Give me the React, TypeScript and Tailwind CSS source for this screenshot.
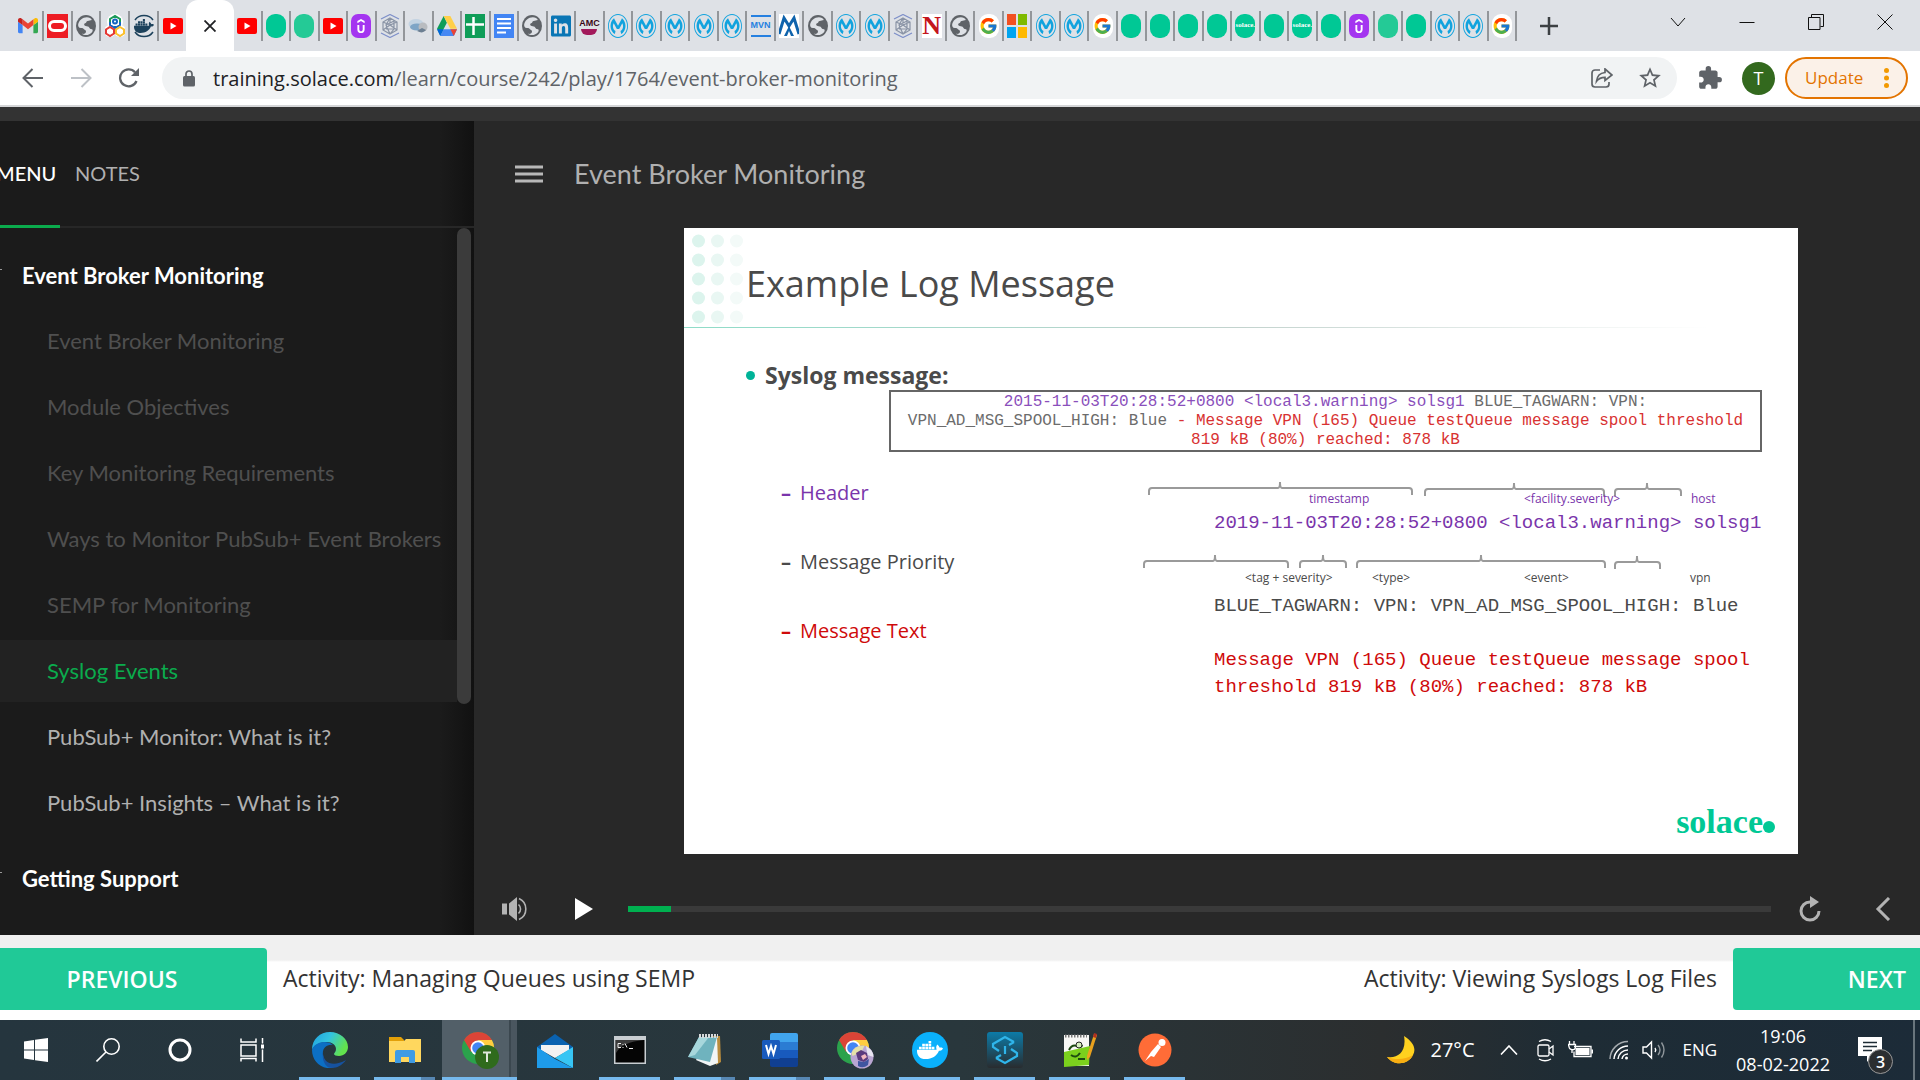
import type { ReactNode } from "react";
import { FcGoogle } from "react-icons/fc";
import { FaLinkedin, FaDocker } from "react-icons/fa";
import { SiUdemy, SiMulesoft } from "react-icons/si";
import { MdExtension, MdOutlineStarBorder } from "react-icons/md";

/* ---------- favicons ---------- */

const Gmail = () => (
  <svg viewBox="0 0 52 40" className="h-[17px] w-5" role="img" aria-label="Gmail">
    <path fill="#4285f4" d="M3.500 40H12V19L0 10v26.500C0 38.400 1.600 40 3.500 40z" />
    <path fill="#34a853" d="M40 40h8.500c1.900 0 3.500-1.600 3.500-3.500V10L40 19z" />
    <path fill="#fbbc04" d="M40 4v15l12-9V5.500C52 1 47 -1.500 43 1.500z" />
    <path fill="#ea4335" d="M12 19V4l14 10.500L40 4v15L26 29.500z" />
    <path fill="#c5221f" d="M0 5.500V10l12 9V4L9 1.500C5-1.500 0 1 0 5.500z" />
  </svg>
);
const Oracle = () => (
  <span className="flex h-6 w-[21px] items-center justify-center bg-[#ed1c24]">
    <span className="h-3 w-[19px] rounded-full border-[3px] border-white" />
  </span>
);
const Globe = () => (
  <svg viewBox="0 0 24 24" className="h-[22px] w-5" preserveAspectRatio="none" aria-label="Site">
    <circle cx="12" cy="12" r="12" fill="#5f6368" />
    <path fill="#dee1e6" d="M13 2.500c3 0 5 1 6 3-2 0-3 1-5 1s-1 2-3 2.500-1.500 2.500.5 3 3.500 0 4.500 2 3.500 1 4 2.500-2 3.500-4 4.500c-3 1.500-7 1-9-.5 3 .5 5-.5 5-2.500s-2-1.500-3-3-3-.5-5-1c-1-1-1.500-2-1.500-3C3 6 8 2.500 13 2.500z" />
  </svg>
);
const Hexes = () => (
  <svg viewBox="0 0 20 24" className="h-6 w-5" fill="none" strokeWidth="2" aria-label="Hexagons">
    <circle cx="10" cy="8" r="8" fill="#fff" stroke="none" />
    <circle cx="5" cy="17" r="6" fill="#fff" stroke="none" />
    <circle cx="15" cy="17" r="6" fill="#fff" stroke="none" />
    <path stroke="#1b9a59" d="M5 8V5l5-3 5 3v3" />
    <path stroke="#1565c0" d="M5 8v3l5 3 5-3V8M10 12v4" />
    <circle cx="10" cy="7.500" r="2" stroke="#1565c0" />
    <path stroke="#e53935" d="M5 13l4 2.500v4L5 22l-4-2.500v-4z" />
    <path stroke="#fbc02d" d="M15 13l4 2.500v4L15 22l-4-2.500v-4z" />
  </svg>
);
const DockerHub = () => (
  <span className="relative flex h-6 w-5 items-center justify-center overflow-hidden text-[#1d425c]">
    <svg viewBox="0 0 20 24" className="absolute inset-0" fill="none" stroke="currentColor" strokeWidth="1.500" aria-hidden="true">
      <path d="M1 6C5 0 15 0 19 6M1 18c4 6 14 6 18 0" />
    </svg>
    <FaDocker className="h-4 w-5" />
  </span>
);
const YouTube = () => (
  <svg viewBox="0 0 20 16" className="h-4 w-5" aria-label="YouTube">
    <rect width="20" height="16" rx="2" fill="#f00" />
    <path d="M7.500 4.500v7l6-3.500z" fill="#fff" />
  </svg>
);
const Green = () => <span className="h-6 w-5 rounded-[9px] bg-[#00c895]" />;
const LightGreen = () => <span className="h-6 w-5 rounded-[9px] bg-[#24ca96]" />;
const SolaceIcon = () => (
  <span className="flex h-6 w-5 items-center justify-center rounded-[9px] bg-[#00c895] font-['Liberation_Serif',serif] text-[7px] font-bold text-white">
    solace.
  </span>
);
const Udemy = () => (
  <span className="flex h-6 w-5 items-center justify-center rounded-[7px] bg-[#a435f0] text-white">
    <SiUdemy className="h-[18px] w-[14px]" />
  </span>
);
const Cube = () => (
  <svg viewBox="0 0 20 24" className="h-6 w-5" fill="none" strokeWidth="1.200" aria-label="Cube">
    <path stroke="#7d8fc9" d="M1 5l9-4.500L19 5M1 19l9 4.500 9-4.500" />
    <path stroke="#8a94a6" d="M10 4l7 4v8l-7 4-7-4V8zM10 4v7M3 8l7 3 7-3M10 11l-7 5M10 11l7 5M10 20l-4-9 8-4M6 11l4-7M14 7v8l-4 5M6 15h8" />
  </svg>
);
const Cloud = () => (
  <svg viewBox="0 0 20 20" className="h-5 w-5" aria-label="Cloud">
    <ellipse cx="8" cy="8" rx="7.500" ry="5" fill="#c3d3e2" />
    <ellipse cx="9" cy="11" rx="7" ry="3.500" fill="#7fa5c6" />
    <ellipse cx="15" cy="11" rx="4.500" ry="4.500" fill="#b9bcc0" />
    <path d="M9 15c4 2 6 2 9-1l-4-2z" fill="#6c7f92" />
  </svg>
);
const Drive = () => (
  <svg viewBox="0 0 87 78" className="h-5 w-5" preserveAspectRatio="none" aria-label="Drive">
    <path fill="#0f9d58" d="M29 0L0 50l14 26 29-50z" />
    <path fill="#ffcf48" d="M29 0h29l29 50H58z" />
    <path fill="#4688f4" d="M14 78l15-26h58L73 78z" />
    <path fill="#0066da" d="M0 52h29L14 78z" />
    <path fill="#ea4335" d="M87 52H58l15 26z" />
  </svg>
);
const Sheets = () => (
  <svg viewBox="0 0 20 24" className="h-6 w-5" aria-label="Sheets">
    <rect width="20" height="24" fill="#0f9d58" />
    <path d="M8.500 3v18M1 10.500h18" stroke="#fff" strokeWidth="2.500" />
  </svg>
);
const Docs = () => (
  <svg viewBox="0 0 20 24" className="h-6 w-5" aria-label="Docs">
    <rect width="20" height="24" fill="#4285f4" />
    <path d="M3 5h14M3 9.500h14M3 14h14M3 18.500h9" stroke="#fff" strokeWidth="2" />
  </svg>
);
const LinkedIn = () => <FaLinkedin className="h-6 w-5 text-[#0a76b5]" preserveAspectRatio="none" />;
const Amc = () => (
  <span className="flex h-6 w-5 flex-col items-center justify-center font-['Liberation_Sans',sans-serif] text-[9px] leading-3 font-bold text-[#3a0616]">
    AMC
    <span className="h-1.5 w-4 rounded-b-full bg-[#a3195b]" />
  </span>
);
const Mule = () => (
  <SiMulesoft className="h-6 w-5 text-[#12a3de]" preserveAspectRatio="none" />
);
const Mvn = () => (
  <span className="flex h-[22px] w-5 items-center justify-center border-y-2 border-[#2680e0] font-['Liberation_Sans',sans-serif] text-[9px] font-bold text-[#2680e0]">
    MVN
  </span>
);
const Peaks = () => (
  <svg viewBox="0 0 20 24" className="h-6 w-5" aria-label="Peaks">
    <rect width="20" height="24" fill="#fff" />
    <path d="M0 20L5 4l5 8 5-8 5 16" fill="none" stroke="#0f63ac" strokeWidth="3" />
    <path d="M5 22l5-10 5 10h-3l-2-5-2 5z" fill="#0f63ac" />
  </svg>
);
const NIcon = () => (
  <span className="flex h-6 w-5 items-center justify-center bg-white font-['Liberation_Serif',serif] text-[26px] leading-6 font-bold text-[#c4151c]">
    N
  </span>
);
const Google = () => (
  <span className="flex h-6 w-5 items-center justify-center rounded-[9px] bg-white">
    <FcGoogle className="h-5 w-[19px]" />
  </span>
);
const Microsoft = () => (
  <span className="grid h-6 w-5 grid-cols-2 gap-0.5">
    <span className="bg-[#f25022]" />
    <span className="bg-[#7fba00]" />
    <span className="bg-[#00a4ef]" />
    <span className="bg-[#ffb900]" />
  </span>
);

const leftTabs = [Gmail, Oracle, Globe, Hexes, DockerHub, YouTube];
const rightTabs = [
  YouTube, Green, LightGreen, YouTube, Udemy, Cube, Cloud, Drive, Sheets, Docs,
  Globe, LinkedIn, Amc, Mule, Mule, Mule, Mule, Mule, Mvn, Peaks,
  Globe, Mule, Mule, Cube, NIcon, Globe, Google, Microsoft, Mule, Mule,
  Google, Green, Green, Green, Green, SolaceIcon, Green, SolaceIcon, Green, Udemy,
  LightGreen, Green, Mule, Mule, Google,
];

function Tab({ icon: Icon, last }: { icon: () => ReactNode; last?: boolean }) {
  return (
    <button
      aria-label="Tab"
      className={
        last
          ? "flex h-[30px] min-w-0 flex-1 items-center justify-center"
          : "flex h-[30px] min-w-0 flex-1 items-center justify-center border-r-2 border-[#93969a]"
      }
    >
      <Icon />
    </button>
  );
}

function TabStrip() {
  return (
    <div className="flex h-[51px] bg-[#dee1e6] pl-[15px] text-[#202124]">
      <div className="flex w-[171px] items-center">
        {leftTabs.map((icon, i) => (
          <Tab key={i} icon={icon} last={i === leftTabs.length - 1} />
        ))}
      </div>
      <div className="flex w-12 items-center justify-center rounded-t-xl bg-white">
        <button aria-label="Close tab">
          <svg viewBox="0 0 12 12" className="h-3 w-3" stroke="#202124" strokeWidth="1.800">
            <path d="M0.500 0.500l11 11M11.500 0.500l-11 11" />
          </svg>
        </button>
      </div>
      <div className="flex w-[1283px] items-center">
        {rightTabs.map((icon, i) => (
          <Tab key={i} icon={icon} />
        ))}
      </div>
      <button aria-label="New tab" className="ml-[23px] self-center">
        <svg viewBox="0 0 18 18" className="h-[18px] w-[18px]" stroke="#3c4043" strokeWidth="2.500">
          <path d="M9 0v18M0 9h18" />
        </svg>
      </button>
      <div className="ml-auto flex h-[43px] items-center gap-[53px] pr-[27px]">
        <button aria-label="Search tabs">
          <svg viewBox="0 0 16 16" className="h-4 w-4" fill="none" stroke="#111">
            <path d="M1 4l7 8 7-8" />
          </svg>
        </button>
        <button aria-label="Minimize">
          <svg viewBox="0 0 16 16" className="h-4 w-4" fill="none" stroke="#111">
            <path d="M0.500 8.500h15" />
          </svg>
        </button>
        <button aria-label="Restore">
          <svg viewBox="0 0 16 16" className="h-4 w-4" fill="none" stroke="#111">
            <path d="M0.500 3.500h11.500v12h-11.500zM3.500 3.500v-3h12v12h-3" />
          </svg>
        </button>
        <button aria-label="Close">
          <svg viewBox="0 0 16 16" className="h-4 w-4" fill="none" stroke="#111">
            <path d="M0.500 0.500l15 15M15.500 0.500l-15 15" />
          </svg>
        </button>
      </div>
    </div>
  );
}

function AddressBar() {
  return (
    <div className="flex h-14 items-center border-b-2 border-[#d5d6d8] bg-white pr-3">
      <button aria-label="Back" className="ml-[22px]">
        <svg viewBox="0 0 22 20" className="h-5 w-[22px]" fill="none" stroke="#5f6368" strokeWidth="2">
          <path d="M21 10H2M10.500 1L1.500 10l9 9" />
        </svg>
      </button>
      <button aria-label="Forward" className="ml-[26px]">
        <svg viewBox="0 0 22 20" className="h-5 w-[22px]" fill="none" stroke="#bdc1c6" strokeWidth="2">
          <path d="M1 10h19M11.500 1l9 9-9 9" />
        </svg>
      </button>
      <button aria-label="Reload" className="ml-[26px]">
        <svg viewBox="0 0 22 20" className="h-5 w-[22px]" fill="none" stroke="#5f6368" strokeWidth="2.300">
          <path d="M18.500 13A8.500 8.500 0 1 1 17 4.200" />
          <path d="M21 0v8h-8z" fill="#5f6368" stroke="none" />
        </svg>
      </button>
      <div className="ml-[22px] flex h-[42px] flex-1 items-center rounded-full bg-[#f1f3f4] pr-3.5 pl-5">
        <svg viewBox="0 0 14 17" className="h-[17px] w-3.5" fill="#5f6368" aria-label="Secure">
          <rect x="1" y="6" width="12" height="10.500" rx="1.500" />
          <path d="M4 7V4a3 3 0 0 1 6 0v3" fill="none" stroke="#5f6368" strokeWidth="1.700" />
        </svg>
        <span className="ml-[17px] flex-1 pt-0.5 text-xl text-[#5f6368]">
          <span className="text-[#202124]">training.solace.com</span>
          /learn/course/242/play/1764/event-broker-monitoring
        </span>
        <button aria-label="Share">
          <svg viewBox="0 0 22 20" className="h-5 w-[22px]" fill="none" stroke="#5f6368" strokeWidth="1.700">
            <path d="M9 2H4a3 3 0 0 0-3 3v11a3 3 0 0 0 3 3h11a3 3 0 0 0 3-3v-2" />
            <path d="M14 1l7 6-7 5.500V9.300c-4 0-6.500 1.200-8.500 4C6 8.500 9 5 14 4.500z" />
          </svg>
        </button>
        <button aria-label="Bookmark" className="ml-6">
          <MdOutlineStarBorder className="h-[26px] w-[26px] text-[#5f6368]" />
        </button>
      </div>
      <button aria-label="Extensions" className="ml-5">
        <MdExtension className="h-[26px] w-[26px] text-[#5f6368]" />
      </button>
      <button className="ml-[19px] h-[33px] w-[33px] rounded-full bg-[#33691e] text-lg text-white">T</button>
      <button className="ml-2.5 flex h-[42px] w-[123px] items-center justify-between rounded-full border-2 border-[#e37400] bg-[#fbf1e8] pr-[17px] pl-[18px] text-[17px] text-[#e37400]">
        Update
        <svg viewBox="0 0 5 20" className="h-5 w-[5px]" fill="#f29900">
          <circle cx="2.500" cy="2.500" r="2.500" />
          <circle cx="2.500" cy="10" r="2.500" />
          <circle cx="2.500" cy="17.500" r="2.500" />
        </svg>
      </button>
    </div>
  );
}

/* ---------- course player ---------- */

const lessons = [
  { title: "Event Broker Monitoring", state: "done" },
  { title: "Module Objectives", state: "done" },
  { title: "Key Monitoring Requirements", state: "done" },
  { title: "Ways to Monitor PubSub+ Event Brokers", state: "done" },
  { title: "SEMP for Monitoring", state: "done" },
  { title: "Syslog Events", state: "current" },
  { title: "PubSub+ Monitor: What is it?", state: "next" },
  { title: "PubSub+ Insights – What is it?", state: "next" },
];
const lessonStyle: Record<string, string> = {
  done: "text-[#4f4f4f]",
  current: "bg-[#222] text-[#0bab4d]",
  next: "text-[#b0b0b0]",
};

function SectionHeading({ children }: { children: ReactNode }) {
  return (
    <h2 className="flex h-[62px] items-center pb-0.5 text-[22px] font-bold text-white">
      <span className="mb-3 h-px w-0.5 bg-[#999]" />
      <span className="pl-5">{children}</span>
    </h2>
  );
}

function Sidebar() {
  return (
    <aside className="flex w-[474px] shrink-0 flex-col overflow-hidden bg-[#1b1b1b] bg-[linear-gradient(to_left,#111_0px,#1b1b1b_34px)] font-['Lato',sans-serif]">
      <div className="flex h-[107px] border-b-2 border-[#272727] text-xl">
        <button className="-mb-0.5 w-[60px] border-b-[3px] border-[#0bab4d] text-left font-medium text-white">
          <span className="-ml-1">MENU</span>
        </button>
        <button className="ml-[15px] pb-0.5 text-[#b0b0b0]">NOTES</button>
      </div>
      <div className="flex flex-1">
        <nav className="flex-1 pt-[17px]">
          <SectionHeading>Event Broker Monitoring</SectionHeading>
          <ul className="mt-[3px] mb-[14px] flex flex-col gap-1">
            {lessons.map((l) => (
              <li key={l.title}>
                <a href="#lesson" className={`flex h-[62px] items-center pb-0.5 pl-[47px] text-[22px] whitespace-nowrap ${lessonStyle[l.state]}`}>
                  {l.title}
                </a>
              </li>
            ))}
          </ul>
          <SectionHeading>Getting Support</SectionHeading>
        </nav>
        <div className="w-[17px]">
          <div className="h-[476px] w-3.5 rounded-full bg-[#3b3b3b]" />
        </div>
      </div>
    </aside>
  );
}

type Brace = { from: number; to: number; peak: number; y: number };
const braces: Brace[] = [
  { from: 6, to: 269, peak: 137, y: 36 },
  { from: 282, to: 461, peak: 371, y: 37 },
  { from: 472, to: 538, peak: 504, y: 37 },
  { from: 1, to: 145, peak: 72, y: 109 },
  { from: 157, to: 203, peak: 180, y: 109 },
  { from: 214, to: 462, peak: 338, y: 109 },
  { from: 472, to: 517, peak: 494, y: 110 },
];

function SyslogDiagram() {
  const label = "absolute font-['Open_Sans',sans-serif] text-xs leading-4 whitespace-nowrap";
  return (
    <div className="relative mr-9 ml-auto w-[619px] pt-[57px] pl-[71px] font-['Liberation_Mono',monospace] text-[19px]">
      <svg viewBox="0 0 619 250" className="absolute top-0 left-0 h-[250px] w-[619px]" fill="none" stroke="#9a9a9a" strokeWidth="2" aria-hidden="true">
        {braces.map((b) => (
          <path
            key={`${b.from}-${b.y}`}
            d={`M${b.from} ${b.y + 7}v-4q0-3 3-3H${b.peak - 2}q2 0 2-6q0 6 2 6H${b.to - 3}q3 0 3 3v4`}
          />
        ))}
      </svg>
      <div className="text-[#7a35ab]">
        <span className={`${label} top-[39px] left-[166px]`}>timestamp</span>
        <span className={`${label} top-[39px] left-[381px]`}>&lt;facility.severity&gt;</span>
        <span className={`${label} top-[39px] left-[548px]`}>host</span>
        <p className="h-7 leading-7 whitespace-nowrap">2019-11-03T20:28:52+0800 &lt;local3.warning&gt; solsg1</p>
      </div>
      <div className="mt-[55px] text-[#4a4a4a]">
        <span className={`${label} top-[118px] left-[102px]`}>&lt;tag + severity&gt;</span>
        <span className={`${label} top-[118px] left-[229px]`}>&lt;type&gt;</span>
        <span className={`${label} top-[118px] left-[381px]`}>&lt;event&gt;</span>
        <span className={`${label} top-[118px] left-[547px]`}>vpn</span>
        <p className="h-7 leading-7 whitespace-nowrap">BLUE_TAGWARN: VPN: VPN_AD_MSG_SPOOL_HIGH: Blue</p>
      </div>
      <p className="mt-[27px] leading-[27px] text-[#cf0a0a]">
        Message VPN (165) Queue testQueue message spool threshold 819 kB (80%) reached: 878 kB
      </p>
    </div>
  );
}

function Slide() {
  return (
    <article className="flex min-h-[626px] flex-col bg-white font-['Open_Sans',sans-serif] text-[#4a4a4a]">
      <header className="flex h-[99px]">
        <svg viewBox="0 0 54 99" className="ml-2 h-[99px] w-[54px]" aria-hidden="true">
          {[13, 32, 51, 70, 89].map((y) => (
            <g key={y}>
              <circle cx="6.500" cy={y} r="6.500" fill="#dcf4ed" />
              <circle cx="25.500" cy={y} r="6.500" fill="#e9f7f3" />
              <circle cx="44.500" cy={y} r="6.500" fill="#f3faf8" />
            </g>
          ))}
        </svg>
        <h1 className="pt-[31px] text-[36px] leading-[50px] text-[#4a4a4a]">Example Log Message</h1>
      </header>
      <div className="h-px bg-[linear-gradient(to_right,#8fdcc8,#c3d3ce_50%,#fff_92%)]" />
      <h2 className="mt-[34px] flex h-7 items-center pb-0.5 pl-[62px] text-[23px] font-bold">
        <span className="mr-2.5 h-[9px] w-[9px] rounded-full bg-[#00b398]" />
        Syslog message:
      </h2>
      <p className="mr-9 ml-[205px] h-[62px] border-2 border-[#666] pt-px text-center font-['Liberation_Mono',monospace] text-base leading-[19px] whitespace-nowrap text-[#6c6c6c]">
        <span className="text-[#8a4fbb]">2015-11-03T20:28:52+0800 &lt;local3.warning&gt; solsg1</span> BLUE_TAGWARN: VPN:
        <br />
        VPN_AD_MSG_SPOOL_HIGH: Blue <span className="text-[#d83232]">- Message VPN (165) Queue testQueue message spool threshold</span>
        <br />
        <span className="text-[#d83232]">819 kB (80%) reached: 878 kB</span>
      </p>
      <div className="flex">
        <ul className="mt-[6px] pl-[97px] text-[20px] leading-[69px] whitespace-nowrap">
          <li className="text-[#7a35ab]"><b className="mr-[9px]">–</b>Header</li>
          <li><b className="mr-[9px]">–</b>Message Priority</li>
          <li className="text-[#cf0a0a]"><b className="mr-[9px]">–</b>Message Text</li>
        </ul>
        <SyslogDiagram />
      </div>
      <div className="mt-auto mr-[23px] mb-3.5 flex items-center self-end font-['Liberation_Serif',serif] text-[34px] leading-9 font-bold text-[#00c895]">
        solace
        <span className="mt-2.5 h-3 w-3 rounded-full bg-[#00c895]" />
      </div>
    </article>
  );
}

function Player() {
  return (
    <main className="flex min-w-0 flex-1 flex-col bg-[#282828]">
      <div className="flex h-[107px] items-center pb-0.5 pl-[41px] font-['Lato',sans-serif]">
        <button aria-label="Toggle menu">
          <svg viewBox="0 0 28 18" className="h-[18px] w-7" stroke="#b8b8b8" strokeWidth="3">
            <path d="M0 2h28M0 9h28M0 16h28" />
          </svg>
        </button>
        <h1 className="pl-[31px] text-[27px] leading-9 text-[#b0b0b0]">Event Broker Monitoring</h1>
      </div>
      <div className="pr-[122px] pl-[210px]">
        <Slide />
      </div>
      <div className="flex flex-1 items-center pt-[28px] pr-[29px] pl-[28px]">
        <button aria-label="Volume">
          <svg viewBox="0 0 27 24" className="h-6 w-[27px]" fill="#b3b3b3">
            <path d="M0 6.500h5v11H0zM7 6.500L15 0v24l-8-6.500z" />
            <path d="M16.500 7.500a6 6 0 0 1 0 9M17 1.500a11.500 11.500 0 0 1 0 21" fill="none" stroke="#b3b3b3" strokeWidth="1.600" />
          </svg>
        </button>
        <button aria-label="Play" className="ml-[46px]">
          <svg viewBox="0 0 18 22" className="h-[22px] w-[18px]" fill="#fff">
            <path d="M0 0l18 11L0 22z" />
          </svg>
        </button>
        <div role="progressbar" aria-valuenow={4} aria-label="Progress" className="ml-[35px] h-1.5 flex-1 bg-[#3a3a3a]">
          <div className="h-full w-[43px] bg-[#00b050]" />
        </div>
        <button aria-label="Replay" className="ml-7">
          <svg viewBox="0 0 22 26" className="h-[26px] w-[22px]" fill="none" stroke="#b3b3b3" strokeWidth="3">
            <path d="M11 6a9 9 0 1 0 9 9" />
            <path d="M11 0v12l9-6z" fill="#b3b3b3" stroke="none" />
          </svg>
        </button>
        <button aria-label="Previous slide" className="ml-[54px]">
          <svg viewBox="0 0 16 24" className="h-6 w-4" fill="none" stroke="#b3b3b3" strokeWidth="3">
            <path d="M14 1L3 12l11 11" />
          </svg>
        </button>
      </div>
    </main>
  );
}

function LessonNav() {
  return (
    <footer className="flex h-[85px] items-center bg-[linear-gradient(to_bottom,#f0f0f0_25px,#fff_27px)] pt-[3px] font-['Open_Sans',sans-serif] text-[23px] text-[#333]">
      <button className="h-[62px] w-[267px] rounded-r bg-[#20c997] pr-[23px] font-semibold text-white">PREVIOUS</button>
      <span className="ml-4 pb-0.5">Activity: Managing Queues using SEMP</span>
      <span className="mr-4 ml-auto pb-0.5">Activity: Viewing Syslogs Log Files</span>
      <button className="h-[62px] w-[187px] rounded-l bg-[#20c997] pr-3.5 text-right font-semibold text-white">NEXT</button>
    </footer>
  );
}

/* ---------- taskbar ---------- */

const Edge = () => (
  <svg viewBox="0 0 36 36" className="h-9 w-9">
    <defs>
      <linearGradient id="edgeTop" x1="0" x2="1" y1="0" y2="0.400">
        <stop offset="0" stopColor="#1fa0e0" />
        <stop offset="0.500" stopColor="#33c3e0" />
        <stop offset="1" stopColor="#62e24d" />
      </linearGradient>
    </defs>
    <path fill="url(#edgeTop)" d="M0 18C0 7 8 0 18 0s18 7 18 15c0 5-4 9-9 9-3 0-5-1-5-2 0-1 2-2 2-5 0-4-4-7-9-7C8 10 2 13 0 18z" />
    <path fill="#0c6fc4" d="M0 18c1-5 7-8 12-8 4 0 7 1 9 3-7-1-11 4-10 10 1 6 5 11 11 13C9 38 0 29 0 18z" />
    <path fill="#16529f" d="M11 21c0 9 9 15 23 7-5 7-12 9-17 7.500C12 33 10 26 11 21z" />
  </svg>
);
const Explorer = () => (
  <svg viewBox="0 0 32 28" className="h-7 w-8">
    <path fill="#e3a008" d="M0 1h12l3 3v4H0z" />
    <path fill="#ffd75e" d="M0 5h15l2-2h15v23H0z" />
    <path fill="#3f9be4" d="M6 27V16q0-2 2-2h16q2 0 2 2v11h-6v-6h-8v6z" />
  </svg>
);
const ChromeMark = ({ badge }: { badge: "initial" | "photo" }) => (
  <svg viewBox="0 0 38 38" className="h-[38px] w-[38px]">
    <circle cx="17" cy="17" r="16" fill="#2ba24c" />
    <path fill="#db4437" d="M3.100 9A16 16 0 0 1 30.900 9H17l-6.900 12z" />
    <path fill="#ffcd40" d="M30.900 9A16 16 0 0 1 17 33l7-12L17 9z" />
    <circle cx="17" cy="17" r="7.500" fill="#fff" />
    <circle cx="17" cy="17" r="5.800" fill="#4285f4" />
    {badge === "initial" ? (
      <>
        <circle cx="26" cy="26" r="12" fill="#2f6b1c" />
        <path d="M22 21.500h8M26 21.500v9.500" stroke="#dfe8da" strokeWidth="2" />
      </>
    ) : (
      <>
        <circle cx="26" cy="26" r="11.500" fill="#b9a6d2" />
        <path d="M15.500 22q3-8 13-7.300l-3 6.300-9 4z" fill="#e4e2a8" />
        <path d="M30 15q8 5 7.500 11l-6-2z" fill="#e9e6f2" />
        <path d="M20 22l5-3 6 3 1 6-4 3-6-2z" fill="#5b3b7e" />
        <path d="M22 30l6 1 5-3-1 6q-5 4-10 1z" fill="#3f55a0" />
        <path d="M25 25l4-2 2 3-4 3z" fill="#f3b9c0" />
      </>
    )}
  </svg>
);
const Mail = () => (
  <svg viewBox="0 0 36 34" className="h-[34px] w-9">
    <path fill="#0a62b0" d="M0 13L18 0l18 13v6H0z" />
    <path fill="#f2f2f2" d="M4 11h28v5L18 24 4 16z" />
    <path fill="#37c5f4" d="M36 13v21L18 24z" />
    <path fill="#1e9be9" d="M0 13l18 12 18 9H0z" />
  </svg>
);
const Cmd = () => (
  <svg viewBox="0 0 32 28" className="h-7 w-8">
    <rect width="32" height="28" fill="#c9ced2" />
    <rect x="1.500" y="4" width="29" height="22.500" fill="#050505" />
    <path d="M2 4h28Q8 6 2 17z" fill="#3b3b3b" />
    <path d="M7 7.500H4v4h3M9 8v1M9 11v1M11 7.500l2 4M15 12.500h4" stroke="#eee" fill="none" />
  </svg>
);
const Notepad = () => (
  <svg viewBox="0 0 34 34" className="h-[34px] w-[34px]">
    <path fill="#b98c3d" d="M24 3h8l1 26-5 3z" />
    <path fill="#f1f5f6" d="M20 4h9l1 26-8 3-14-6z" />
    <path fill="#6fb3be" d="M11 4h18l-7 25L0 24z" />
    <path fill="#a7d7dc" d="M11 4h10L7 22l-7 2z" />
    <path d="M11 3h19" stroke="#d7dadb" strokeWidth="4" strokeDasharray="2 1" />
  </svg>
);
const Word = () => (
  <svg viewBox="0 0 36 34" className="h-[34px] w-9">
    <path fill="#41a5ee" d="M8 2q0-2 2-2h24q2 0 2 2v7H8z" />
    <path fill="#2b7cd3" d="M8 9h28v8H8z" />
    <path fill="#185abd" d="M8 17h28v8H8z" />
    <path fill="#103f91" d="M8 25h28v7q0 2-2 2H10q-2 0-2-2z" />
    <rect y="7" width="18" height="19" rx="1.500" fill="#185abd" />
    <path d="M4 12l2.500 9L9 13l2.500 8L14 12" fill="none" stroke="#fff" strokeWidth="2" />
  </svg>
);
const DockerApp = () => (
  <span className="flex h-9 w-9 items-center justify-center rounded-full bg-[#0ab0fb] text-white">
    <FaDocker className="h-[26px] w-[26px]" />
  </span>
);
const SLogo = () => (
  <svg viewBox="0 0 36 36" className="h-9 w-9">
    <defs>
      <linearGradient id="sBg" x1="0" x2="0" y1="0" y2="1">
        <stop offset="0" stopColor="#0c7ba8" />
        <stop offset="1" stopColor="#292c2f" />
      </linearGradient>
    </defs>
    <rect width="36" height="36" rx="3" fill="url(#sBg)" />
    <path d="M27 10l-9-5L6 12v3l6 4M9 26l9 5 12-7v-3l-6-4M27 10l-5 3M9 26l5-3M18 14v8" fill="none" stroke="#2fb5ea" strokeWidth="2.200" />
  </svg>
);
const NotepadPP = () => (
  <svg viewBox="0 0 34 34" className="h-[34px] w-[34px]">
    <path fill="#f7f7f5" d="M1 2h25v31H1z" />
    <path fill="#7bd01d" d="M1 19l26-6-1 19-25 2z" />
    <path d="M2 3h22" stroke="#777" strokeWidth="3" strokeDasharray="1.500 1.500" />
    <path d="M6 17q3-6 8-4t5-1M8 22q5 4 9-2M15 26h7" stroke="#1c4a10" strokeWidth="2" fill="none" />
    <circle cx="16" cy="12" r="3" fill="#d5efc0" stroke="#222" />
    <path d="M31 1l3 1-7 22-3 3v-4z" fill="#e9a11e" />
    <path d="M31 0l3 1-1 4-3-1z" fill="#b03020" />
  </svg>
);
const Postman = () => (
  <svg viewBox="0 0 34 34" className="h-[34px] w-[34px]">
    <circle cx="17" cy="17" r="16.500" fill="#ff6c37" />
    <circle cx="24" cy="9.500" r="3.500" fill="#fff" />
    <path d="M20 11l3 3-7 10-3-1-6 5 6-9z" fill="#fff" />
  </svg>
);

const apps: { name: string; icon: ReactNode; line: boolean; stacked?: boolean; active?: boolean }[] = [
  { name: "Edge", icon: <Edge />, line: true },
  { name: "File Explorer", icon: <Explorer />, line: true, stacked: true },
  { name: "Chrome", icon: <ChromeMark badge="initial" />, line: true, active: true },
  { name: "Mail", icon: <Mail />, line: false },
  { name: "Command Prompt", icon: <Cmd />, line: true },
  { name: "Notepad", icon: <Notepad />, line: true, stacked: true },
  { name: "Word", icon: <Word />, line: true, stacked: true },
  { name: "Chrome profile", icon: <ChromeMark badge="photo" />, line: true },
  { name: "Docker", icon: <DockerApp />, line: true },
  { name: "Streams", icon: <SLogo />, line: true },
  { name: "Notepad++", icon: <NotepadPP />, line: true },
  { name: "Postman", icon: <Postman />, line: true },
];

function TaskApp({ name, icon, line, stacked, active }: (typeof apps)[number]) {
  return (
    <button
      aria-label={name}
      className={
        active
          ? "flex h-full w-[75px] flex-col items-center bg-[linear-gradient(to_right,#525f68_67px,#3b474f_67px,#3b474f_69px,#4a565f_69px)]"
          : "flex h-full w-[75px] flex-col items-center"
      }
    >
      <span className="flex flex-1 items-center pt-0.5">{icon}</span>
      {line && (
        <span className={active ? "flex h-[3px] w-full bg-[#76b9ed]" : "flex h-[3px] w-[61px] bg-[#76b9ed]"}>
          {stacked && <span className="ml-auto w-3.5 bg-[#5787b3]" />}
        </span>
      )}
    </button>
  );
}

function Taskbar() {
  return (
    <div className="flex h-[60px] items-center bg-[linear-gradient(to_right,#25353e,#29373c_50%,#2b2e2f_72%,#1e2c35_82%,#1c2b38)] text-white">
      <div className="flex w-[288px] items-center [&>button]:flex [&>button]:w-[72px] [&>button]:justify-center">
        <button aria-label="Start">
          <svg viewBox="0 0 24 24" className="h-6 w-6" fill="#fff">
            <path d="M0 3.500L10 2v9.500H0zM11 1.800L24 0v11.500H11zM0 12.500h10V22L0 20.500zM11 12.500h13V24l-13-1.800z" />
          </svg>
        </button>
        <button aria-label="Search">
          <svg viewBox="0 0 24 24" className="h-6 w-6" fill="none" stroke="#fff" strokeWidth="1.600">
            <circle cx="15.500" cy="8.500" r="7.700" />
            <path d="M10 14L0.500 23.500" />
          </svg>
        </button>
        <button aria-label="Cortana">
          <svg viewBox="0 0 24 24" className="h-6 w-6" fill="none" stroke="#fff" strokeWidth="3">
            <circle cx="12" cy="12" r="10" />
          </svg>
        </button>
        <button aria-label="Task view">
          <svg viewBox="0 0 24 24" className="h-6 w-6" fill="none" stroke="#fff" strokeWidth="1.500">
            <path d="M1 0.500v3.500h15V0.500M1 7h15v11H1zM1 23.500v-3h15v3M22.500 0v5.500M22.500 11.500V24" />
            <path d="M22.500 6.500v4" strokeWidth="3" />
          </svg>
        </button>
      </div>
      <div className="ml-1 flex h-full">
        {apps.map((a) => (
          <TaskApp key={a.name} {...a} />
        ))}
      </div>
      <div className="ml-auto flex h-full items-center">
        <svg viewBox="0 0 28 28" className="h-7 w-7" aria-label="Clear night">
          <path d="M17 0c8 5 13 12 9 19-4 9-18 12-26 2 10 2 20-5 17-21z" fill="#ffd21f" />
          <path d="M26 19c-4 9-18 12-26 2 8 3 18 3 26-2z" fill="#f9ae12" />
        </svg>
        <span className="ml-[15px] w-[54px] text-xl">27°C</span>
        <svg viewBox="0 0 18 10" className="ml-4 h-2.5 w-[18px]" fill="none" stroke="#fff" strokeWidth="1.600">
          <path d="M1 9.500L9 1l8 8.500" />
        </svg>
        <svg viewBox="0 0 18 24" className="ml-[19px] h-6 w-[18px]" fill="none" stroke="#fff" strokeWidth="1.300">
          <rect x="1" y="7" width="11" height="11" rx="1.500" />
          <path d="M12 11l4-3v9l-4-3M2 3.500q6-3.500 12 0M2 21q6 3.500 12 0" />
        </svg>
        <svg viewBox="0 0 25 18" className="ml-[13px] h-[18px] w-[25px]" fill="none" stroke="#fff" strokeWidth="1.300">
          <path d="M6 5.500h17v10H6v-5" />
          <path d="M7.500 7h14v7h-14zM23.500 8.500h1.500v4h-1.500z" fill="#fff" stroke="none" />
          <path d="M1.500 0v3M6 0v3M0 3.500h7.500v2a3 3 0 0 1-6.500 0zM4 9v3" />
        </svg>
        <svg viewBox="0 0 20 20" className="ml-4 h-5 w-5" fill="none" stroke="#fff" strokeWidth="1.500">
          <path d="M1 19A18 18 0 0 1 19 1.500" strokeOpacity="0.600" />
          <path d="M5 19A14 14 0 0 1 19 6M9 19a10 10 0 0 1 10-9M13 19a6 6 0 0 1 6-5" />
          <circle cx="17.500" cy="18" r="1.500" fill="#fff" stroke="none" />
        </svg>
        <svg viewBox="0 0 24 20" className="ml-[13px] h-5 w-6" fill="none" stroke="#fff" strokeWidth="1.400">
          <path d="M1 7h3.500L9.500 2v16l-5-5H1z" />
          <path d="M13 8q1.500 2 0 4" />
          <path d="M16 5q4 5 0 10M19.500 2.500q5 7.500 0 15" strokeOpacity="0.500" />
        </svg>
        <span className="ml-4 text-[17px]">ENG</span>
        <div className="ml-[19px] flex flex-col items-center text-lg leading-7">
          <span>19:06</span>
          <span>08-02-2022</span>
        </div>
        <button aria-label="Notifications" className="relative ml-7">
          <svg viewBox="0 0 24 26" className="h-[26px] w-6">
            <path d="M0 0h24v19H14l-5 6v-6H0z" fill="#fff" />
            <path d="M5 5.500h14M5 9.500h14M5 13.500h9" stroke="#1e2c35" strokeWidth="1.300" />
          </svg>
          <span className="absolute top-3 left-2.5 flex h-[25px] w-[25px] items-center justify-center rounded-full border border-[#999] bg-[#2b2e31] text-base font-semibold">3</span>
        </button>
        <span className="ml-[31px] h-full w-0.5 bg-[#69757d]" />
        <span className="w-[5px]" />
      </div>
    </div>
  );
}

export default function App() {
  return (
    <div className="flex min-h-screen flex-col bg-white font-['Open_Sans',sans-serif]">
      <TabStrip />
      <AddressBar />
      <div className="h-3.5 bg-[#333]" />
      <div className="flex flex-1">
        <Sidebar />
        <Player />
      </div>
      <LessonNav />
      <Taskbar />
    </div>
  );
}
